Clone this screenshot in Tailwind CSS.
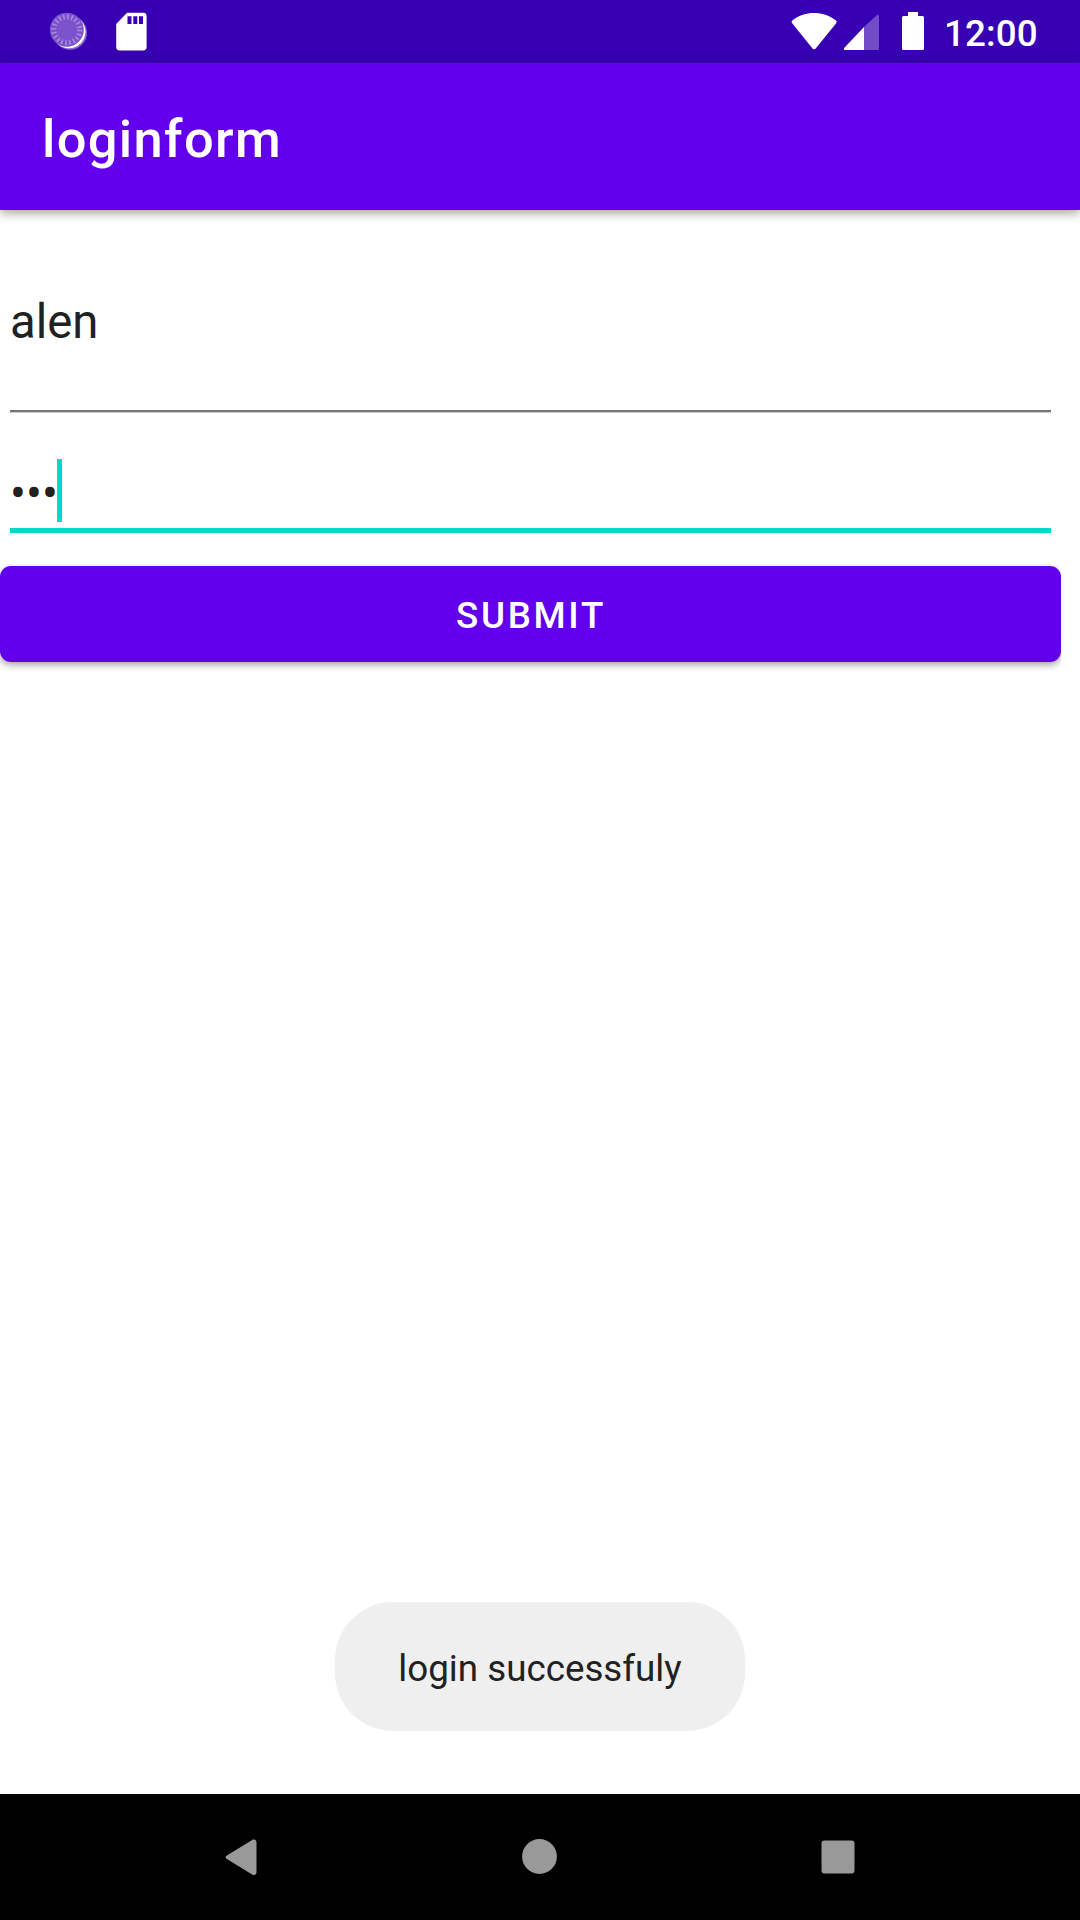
<!DOCTYPE html>
<html lang="en">
<head>
<meta charset="utf-8">
<title>loginform</title>
<script src="https://cdn.jsdelivr.net/npm/@tailwindcss/browser@4"></script>
</head>
<body class="bg-white">
<div class="flex h-[1920px] w-[1080px] flex-col overflow-hidden bg-white font-[Roboto,sans-serif] text-[#212121]">

  <!-- Status bar -->
  <header class="flex h-[63px] shrink-0 bg-[#3700b3] text-white">
    <svg class="h-[63px] w-[160px]" viewBox="0 0 160 63" fill="none">
      <circle cx="70" cy="32.800" r="17" fill="#fff" fill-opacity=".4"/>
      <circle cx="69" cy="31.800" r="16.500" fill="#fff"/>
      <circle cx="66.800" cy="29.800" r="17" fill="#7b52cc"/>
      <circle cx="66.800" cy="29.800" r="13" stroke="#a78ddd" stroke-width="5" stroke-dasharray="1.5 2.584"/>
      <path fill="#fff" fill-rule="evenodd" d="M127 12.7h16.200a3.400 3.400 0 0 1 3.400 3.400v31a3.400 3.400 0 0 1-3.400 3.400h-23.600a3.400 3.400 0 0 1-3.400-3.400V24zM127.500 16.300v7.700h4v-7.700zM133.300 16.300v7.700h4v-7.700zM139 16.300v7.700h4v-7.700z"/>
    </svg>
    <svg class="ml-auto h-[63px] w-[150px]" viewBox="780 0 150 63" fill="#fff">
      <path d="M792.200 23.200c-.9-1.100-.7-2.200.4-2.900C799 15.400 806 13 814 13s15 2.400 21.700 7.300c1.100.8 1.300 1.800.5 2.900l-20.300 25c-1 1.300-2.600 1.300-3.600 0z"/>
      <path d="M864 27v23h-19c-1.200 0-1.500-1.200-.6-2.200z"/>
      <path fill="#724bc9" d="M864 27v23h13.500c.9 0 1.500-.5 1.500-1.500V16.500c0-1.600-1.500-2.200-2.600-1.100z"/>
      <path d="M908 12h10v4h4.500a1.500 1.500 0 0 1 1.500 1.500v31a1.500 1.500 0 0 1-1.500 1.500h-19a1.500 1.500 0 0 1-1.500-1.500v-31a1.500 1.500 0 0 1 1.500-1.500h4.500z"/>
    </svg>
    <span class="w-[150px] pt-[2px] pl-[14px] text-[36.75px] leading-[63px] font-medium tracking-[0.003em]">12:00</span>
  </header>

  <!-- App bar -->
  <div class="z-10 h-[147px] shrink-0 bg-[#6200ee] pt-[3px] pl-[42px] shadow-[0_3px_10px_rgba(0,0,0,0.38)]">
    <h1 class="text-[52.5px] leading-[147px] font-medium tracking-[0.025em] text-white">loginform</h1>
  </div>

  <!-- Login form -->
  <main class="flex w-[1061px] grow flex-col">
    <div class="ml-[10px] h-[202px] w-[1041px] border-b-2 border-[#757575] pt-[84px] text-[47.25px] leading-[56px] shadow-[0_1px_0_#cfcfcf]">alen</div>
    <div class="ml-[10px] flex h-[121px] w-[1041px] items-start border-b-[5px] border-[#03dac5] pt-[47px]">
      <span class="w-[47px] pt-1 text-[47.25px] leading-[63px]">•••</span>
      <span class="h-[63px] w-[5px] bg-[#03dac5]"></span>
    </div>
    <div class="-mt-2 overflow-hidden pt-[41px] pb-4">
      <button class="block h-[96px] w-[1061px] rounded-[11px] bg-[#6200ee] pt-1 pl-px text-[36.75px] font-medium tracking-[0.073em] text-white shadow-[0_3px_7px_rgba(0,0,0,0.36)]">SUBMIT</button>
    </div>
  </main>

  <!-- Toast -->
  <div class="mb-[63px] h-[129px] w-[410px] shrink-0 self-center rounded-[58px] bg-[#efefef] pt-[2px] text-center text-[36.75px] leading-[129px]">login successfuly</div>

  <!-- Navigation bar -->
  <nav class="h-[126px] shrink-0 bg-black">
    <svg class="h-[126px] w-[1080px]" viewBox="0 0 1080 126" fill="#999">
      <path d="M226.500 61.800l25.600-15.800c2-1.200 4.400 0 4.400 2.200v30.200c0 2.200-2.400 3.400-4.400 2.200l-25.600-15.800c-1.300-.8-1.300-2.200 0-3z"/>
      <circle cx="539.500" cy="62.500" r="17.400"/>
      <rect x="821.500" y="46.500" width="33" height="33" rx="3"/>
    </svg>
  </nav>
</div>
</body>
</html>
